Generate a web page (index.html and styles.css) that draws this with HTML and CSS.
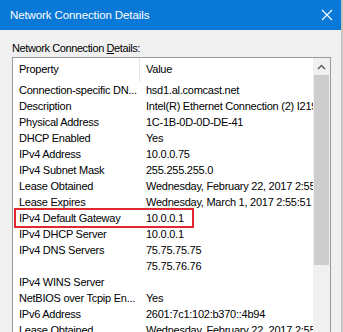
FILE: index.html
```html
<!DOCTYPE html>
<html>
<head>
<meta charset="utf-8">
<title>Network Connection Details</title>
<link rel="stylesheet" href="styles.css">
</head>
<body>
<div class="window">
  <div class="titlebar">
    <span class="title">Network Connection Details</span>
    <svg class="close" width="12" height="12" viewBox="0 0 12 12">
      <path d="M1 1 L11 11 M11 1 L1 11" stroke="#fff" stroke-width="1.1" fill="none"/>
    </svg>
  </div>
  <div class="content">
    <div class="label">Network Connection <u>D</u>etails:</div>
    <div class="listbox">
      <div class="list">
        <div class="head">
          <div class="hcell first">Property</div>
          <div class="hcell">Value</div>
        </div>
        <div class="row"><div class="cell">Connection-specific DN...</div><div class="cell">hsd1.al.comcast.net</div></div>
        <div class="row"><div class="cell">Description</div><div class="cell">Intel(R) Ethernet Connection (2) I219-V</div></div>
        <div class="row"><div class="cell">Physical Address</div><div class="cell">1C-1B-0D-0D-DE-41</div></div>
        <div class="row"><div class="cell">DHCP Enabled</div><div class="cell">Yes</div></div>
        <div class="row"><div class="cell">IPv4 Address</div><div class="cell">10.0.0.75</div></div>
        <div class="row"><div class="cell">IPv4 Subnet Mask</div><div class="cell">255.255.255.0</div></div>
        <div class="row"><div class="cell">Lease Obtained</div><div class="cell">Wednesday, February 22, 2017 2:55:51 AM</div></div>
        <div class="row"><div class="cell">Lease Expires</div><div class="cell">Wednesday, March 1, 2017 2:55:51 AM</div></div>
        <div class="row"><div class="cell">IPv4 Default Gateway</div><div class="cell">10.0.0.1</div></div>
        <div class="row"><div class="cell">IPv4 DHCP Server</div><div class="cell">10.0.0.1</div></div>
        <div class="row"><div class="cell">IPv4 DNS Servers</div><div class="cell">75.75.75.75</div></div>
        <div class="row"><div class="cell"></div><div class="cell">75.75.76.76</div></div>
        <div class="row"><div class="cell">IPv4 WINS Server</div><div class="cell"></div></div>
        <div class="row"><div class="cell">NetBIOS over Tcpip En...</div><div class="cell">Yes</div></div>
        <div class="row"><div class="cell">IPv6 Address</div><div class="cell">2601:7c1:102:b370::4b94</div></div>
        <div class="row"><div class="cell">Lease Obtained</div><div class="cell">Wednesday, February 22, 2017 2:55:51 AM</div></div>
        <div class="highlight"></div>
      </div>
      <div class="scrollbar">
        <div class="arrow">
          <svg width="9" height="6" viewBox="0 0 9 6">
            <path d="M1 5 L4.5 1.5 L8 5" stroke="#606060" stroke-width="1.5" fill="none"/>
          </svg>
        </div>
        <div class="thumb"></div>
      </div>
    </div>
  </div>
</div>
</body>
</html>
```

FILE: styles.css
```css
body {
  margin: 0;
  font-family: "Liberation Sans", Arial, sans-serif;
  font-size: 11px;
  letter-spacing: -0.25px;
  color: #000;
  background: #f0f0f0;
}

.window {
  width: 343px;
  height: 332px;
  overflow: hidden;
  display: flex;
  flex-direction: column;
  border-right: 2px solid #c4c4c4;
  box-sizing: border-box;
}

.titlebar {
  height: 30px;
  flex: none;
  background: #0a78d7;
  color: #fff;
  display: flex;
  align-items: center;
  justify-content: space-between;
  padding: 0 8px 0 10px;
  font-size: 11.5px;
  letter-spacing: -0.1px;
}

.title {
  margin-top: -1px;
}

.close {
  display: block;
}

.content {
  flex: 1;
  padding: 11px 10px 0 12px;
  display: flex;
  flex-direction: column;
  min-height: 0;
}

.label {
  line-height: 14px;
  margin-bottom: 2px;
  letter-spacing: -0.4px;
}

.label u {
  text-decoration-thickness: 1px;
}

.listbox {
  flex: 1;
  display: flex;
  border: 1px solid #9a9a9a;
  border-bottom: none;
  background: #fff;
  min-height: 0;
}

.list {
  flex: 1;
  position: relative;
  overflow: hidden;
}

.head {
  display: grid;
  grid-template-columns: 127px 1fr;
  height: 24px;
}

.hcell {
  padding-left: 6px;
  line-height: 22px;
  white-space: nowrap;
}

.hcell.first {
  border-right: 1px solid #e5e5e5;
}

.row {
  display: grid;
  grid-template-columns: 127px 1fr;
  height: 16px;
}

.cell {
  padding-left: 6px;
  line-height: 16px;
  white-space: nowrap;
  overflow: hidden;
}

.highlight {
  position: absolute;
  left: 1px;
  top: 150px;
  width: 180px;
  height: 20px;
  border: 2px solid #de2a2e;
  box-sizing: border-box;
}

.scrollbar {
  width: 17px;
  flex: none;
  background: #f0f0f0;
  display: flex;
  flex-direction: column;
}

.arrow {
  height: 17px;
  display: flex;
  align-items: center;
  justify-content: center;
}

.thumb {
  height: 190px;
  margin: 0 1px;
  background: #cdcdcd;
}
```
